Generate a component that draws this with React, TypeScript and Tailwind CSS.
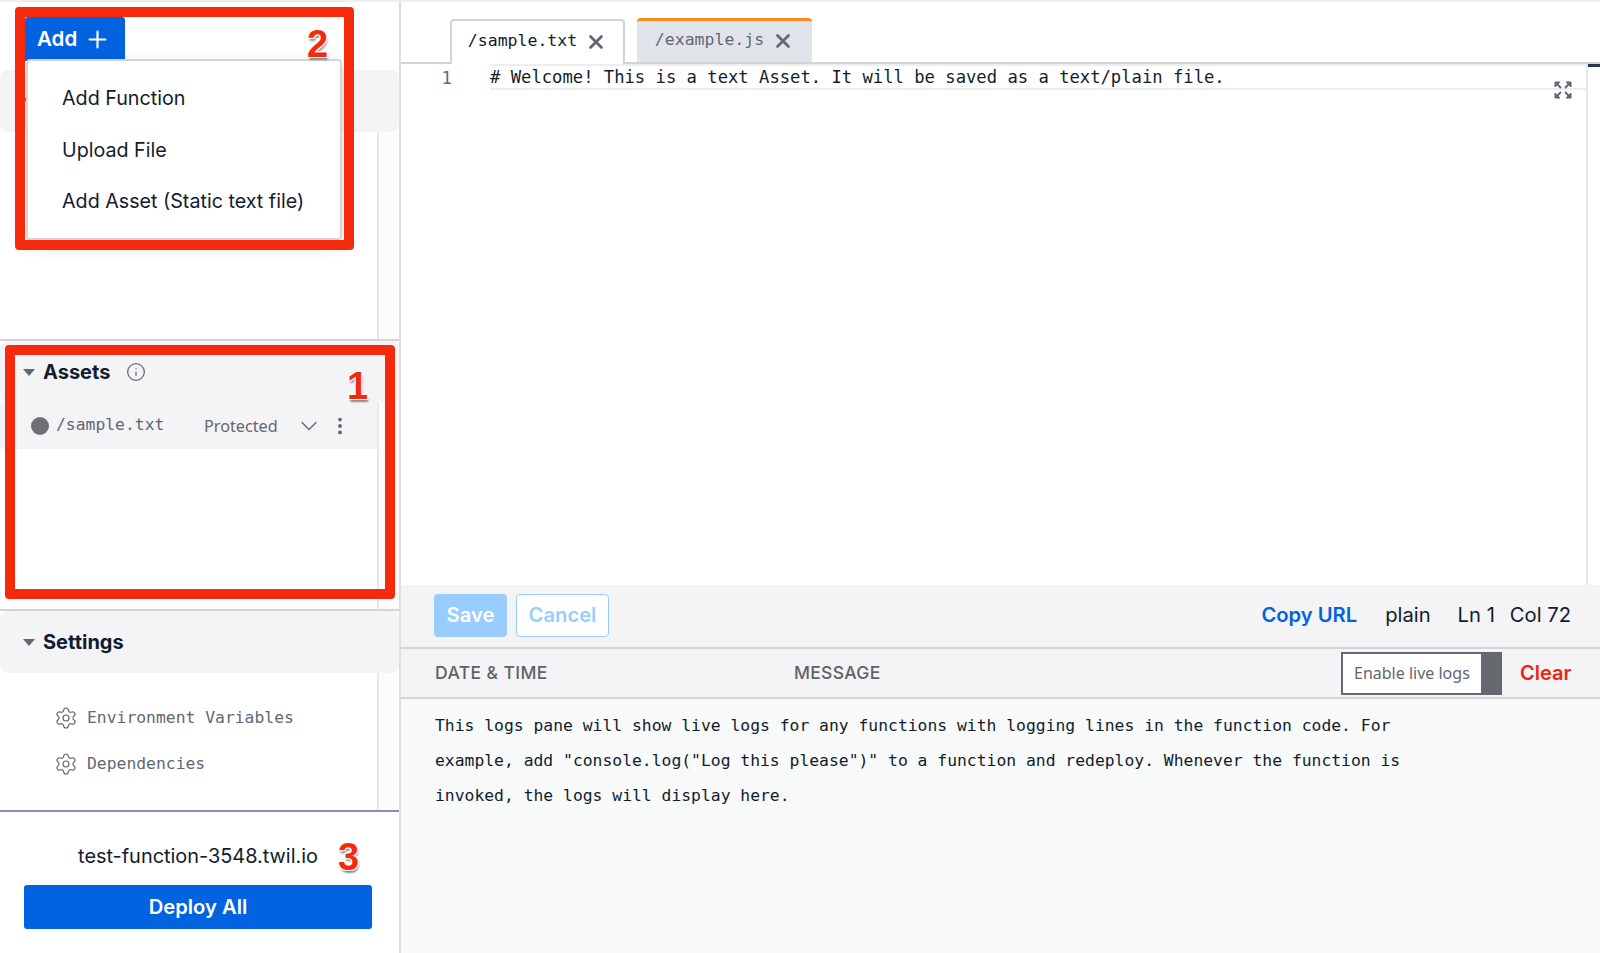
import { ChevronDown, EllipsisVertical, Info, Plus, Settings, X } from "lucide-react";

const inter = "font-['Inter','Liberation_Sans',sans-serif]";
const mono = "font-['DejaVu_Sans_Mono','Liberation_Mono',monospace]";
const digit =
  "absolute font-['Liberation_Sans',sans-serif] font-bold text-[38px] leading-none text-[#f52a0c] [text-shadow:1px_1px_0_#fff,-1px_-1px_0_#fff,1px_-1px_0_#fff,-1px_1px_0_#fff,1px_3px_2px_#888]";

function Caret() {
  return <div className="w-0 h-0 border-x-[6px] border-x-transparent border-t-[7px] border-t-[#636773]" />;
}

function Track() {
  return <div className="w-[22px] shrink-0 border-l-2 border-[#e8e8ea] bg-[#fcfcfc]" />;
}

function SectionHeader({ title, children }: { title?: string; children?: React.ReactNode }) {
  return (
    <div className="h-[62px] shrink-0 bg-[#f4f4f6] rounded-lg flex items-center pl-[23px]">
      <Caret />
      <span className="ml-[8px] text-[20px] font-bold text-[#121c2d]">{title}</span>
      {children}
    </div>
  );
}

function SettingRow({ label }: { label: string }) {
  return (
    <div className="h-[46px] flex items-center pl-[54px]">
      <Settings size={24} strokeWidth={1.2} className="text-[#636773]" />
      <span className={`ml-[9px] text-[16.36px] text-[#636773] ${mono}`}>{label}</span>
    </div>
  );
}

function Tab({ label, active }: { label: string; active?: boolean }) {
  return (
    <div
      className={
        active
          ? "w-[175px] h-[45px] -mb-[2px] pb-[2px] flex items-center justify-center gap-[8px] bg-white border-2 border-b-0 border-[#d4d4d6] rounded-t-[4px] text-[#121c2d]"
          : "w-[175px] h-[44px] pb-[2px] flex items-center justify-center gap-[8px] bg-[#e1e3ea] border-t-[3px] border-[#f98b16] rounded-t-[4px] text-[#636773]"
      }
    >
      <span className={`text-[16.5px] ${mono}`}>{label}</span>
      <X size={22} strokeWidth={3} className="text-[#636773]" />
    </div>
  );
}

function ExpandIcon() {
  return (
    <svg width="18" height="18" viewBox="0 0 18 18" className="absolute right-[28px] top-[17px] text-[#636773]" fill="currentColor" stroke="currentColor">
      <path d="M1 1h5L1 6z" />
      <path d="M3 3l4 4" strokeWidth="2" />
      <path d="M17 1h-5l5 5z" />
      <path d="M15 3l-4 4" strokeWidth="2" />
      <path d="M1 17h5l-5-5z" />
      <path d="M3 15l4-4" strokeWidth="2" />
      <path d="M17 17h-5l5-5z" />
      <path d="M15 15l-4-4" strokeWidth="2" />
    </svg>
  );
}

export default function App() {
  return (
    <div className={`relative w-[1600px] h-[953px] overflow-hidden bg-white flex flex-col ${inter}`}>
      <div className="h-[2px] shrink-0 bg-[#eeeeee]" />
      <div className="flex flex-1 min-h-0">
        {/* sidebar */}
        <aside className="relative w-[401px] shrink-0 border-r-2 border-[#dedee0] flex flex-col">
          <div className="h-[339px] shrink-0 border-b-2 border-[#d4d4d6] flex flex-col">
            <div className="h-[68px] shrink-0 pl-[25px] pt-[15px]">
              <div className="w-[100px] h-[44px] bg-[#0263e0] rounded-t-[3px] flex items-center pl-[12px] gap-[7px] text-white text-[20.5px] font-semibold">
                Add
                <Plus size={27} strokeWidth={1.9} />
              </div>
            </div>
            {/* the Functions header sits behind the open menu */}
            <SectionHeader />
            <div className="flex flex-1 justify-end">
              <Track />
            </div>
          </div>

          {/* add menu */}
          <div className="absolute left-[26px] top-[57px] w-[316px] h-[181px] bg-white border-2 border-[#d4d4d6] rounded-[4px] shadow-[0_6px_20px_rgba(0,0,0,0.12)] flex flex-col justify-center pl-[34px] pt-[2px] text-[19.7px] text-[#121c2d]">
            <div className="h-[51.5px] flex items-center">Add Function</div>
            <div className="h-[51.5px] flex items-center">Upload File</div>
            <div className="h-[51.5px] flex items-center">Add Asset (Static text file)</div>
          </div>

          <div className="h-[270px] shrink-0 border-b-2 border-[#d4d4d6] flex flex-col">
            <SectionHeader title="Assets">
              <Info size={20} strokeWidth={1.5} className="ml-[16px] text-[#636773]" />
            </SectionHeader>
            <div className="flex flex-1 min-h-0">
              <div className="flex-1 min-w-0">
                <div className="h-[46px] bg-[#f4f4f6] flex items-center pl-[31px]">
                  <div className="w-[18px] h-[18px] rounded-full bg-[#6e7076]" />
                  <span className={`ml-[7px] w-[148px] pb-[2px] text-[16.36px] text-[#636773] ${mono}`}>/sample.txt</span>
                  <span className="font-['Noto_Sans',sans-serif] text-[16.2px] text-[#636773]">Protected</span>
                  <ChevronDown size={28} strokeWidth={1.15} className="ml-[17px] text-[#636773]" />
                  <EllipsisVertical size={22} strokeWidth={2.2} className="ml-[6px] text-[#636773]" />
                </div>
              </div>
              <Track />
            </div>
          </div>

          <div className="h-[201px] shrink-0 border-b-2 border-[#8891aa] flex flex-col">
            <SectionHeader title="Settings" />
            <div className="flex flex-1 min-h-0">
              <div className="flex-1 pt-[22px]">
                <SettingRow label="Environment Variables" />
                <SettingRow label="Dependencies" />
              </div>
              <Track />
            </div>
          </div>

          <div className="flex-1 flex flex-col pl-[24px] pr-[27px]">
            <div className="text-center mt-[31px] text-[19.9px] leading-[26px] text-[#121c2d]">test-function-3548.twil.io</div>
            <div className="mt-[16px] h-[44px] bg-[#0263e0] rounded-[3px] flex items-center justify-center text-white text-[20.2px] font-semibold">
              Deploy All
            </div>
          </div>
        </aside>

        {/* editor and logs */}
        <main className="flex-1 min-w-0 flex flex-col">
          <div className="h-[62px] shrink-0 border-b-2 border-[#d4d4d6] flex items-end pl-[49px] gap-[12px]">
            <Tab label="/sample.txt" active />
            <Tab label="/example.js" />
          </div>
          <div className="relative h-[521px] shrink-0 flex">
            <div className={`w-[89px] shrink-0 pt-[3px] pr-[38px] text-right text-[17.25px] leading-[23px] text-[#606b85] ${mono}`}>1</div>
            <div className="flex-1 min-w-0">
              <div className={`h-[26px] bg-white border-y-2 border-[#eeeeee] text-[17.2px] leading-[22px] text-[#121c2d] whitespace-pre ${mono}`}>
                # Welcome! This is a text Asset. It will be saved as a text/plain file.
              </div>
            </div>
            <div className="w-[14px] shrink-0 border-l-2 border-[#e8e8ea]">
              <div className="h-[3px] bg-[#2a3550]" />
            </div>
            <ExpandIcon />
          </div>
          <div className="h-[64px] shrink-0 bg-[#f4f4f6] border-b-2 border-[#d4d4d6] flex items-center pl-[33px] pr-[29px] pb-[1px] text-[20.2px]">
            <div className="w-[73px] h-[43px] rounded-[4px] bg-[#99cdff] flex items-center justify-center text-white font-semibold">Save</div>
            <div className="ml-[9px] w-[93px] h-[43px] rounded-[4px] bg-white border border-[#99cdff] flex items-center justify-center text-[#99cdff] font-semibold">Cancel</div>
            <div className="ml-auto text-[#0263e0] font-semibold">Copy URL</div>
            <div className="ml-[28px] text-[#121c2d]">plain</div>
            <div className="ml-[27px] text-[#121c2d]">Ln 1</div>
            <div className="ml-[15px] text-[#121c2d]">Col 72</div>
          </div>
          <div className="h-[50px] shrink-0 bg-[#f4f4f6] border-b-2 border-[#d4d4d6] flex items-center pl-[34px] pr-[29px] text-[#5f6268]">
            <div className="w-[359px] text-[17.5px] font-medium tracking-[0.4px]">DATE &amp; TIME</div>
            <div className="text-[17.5px] font-medium tracking-[0.3px]">MESSAGE</div>
            <div className="ml-auto w-[161px] h-[43px] flex border-2 border-[#66686f] bg-white">
              <div className="flex-1 flex items-center pl-[11px] font-['Noto_Sans',sans-serif] text-[16px] text-[#63666f]">Enable live logs</div>
              <div className="w-[19px] bg-[#66686f]" />
            </div>
            <div className="ml-[18px] w-[51px] text-[20px] font-semibold text-[#f5200f]">Clear</div>
          </div>
          <div className={`flex-1 bg-[#f8f9f9] pl-[34px] pt-[10px] text-[16.36px] leading-[34.8px] text-[#121c2d] ${mono}`}>
            <div>This logs pane will show live logs for any functions with logging lines in the function code. For</div>
            <div>example, add "console.log("Log this please")" to a function and redeploy. Whenever the function is</div>
            <div>invoked, the logs will display here.</div>
          </div>
        </main>
      </div>

      {/* annotations drawn over the screenshot */}
      <div className="absolute left-[15px] top-[7px] w-[339px] h-[243px] border-[10px] border-[#f52a0c] rounded-[4px]" />
      <div className="absolute left-[5px] top-[345px] w-[390px] h-[254px] border-[10px] border-[#f52a0c] rounded-[4px]" />
      <div className={`${digit} left-[307px] top-[25px]`}>2</div>
      <div className={`${digit} left-[347px] top-[367px]`}>1</div>
      <div className={`${digit} left-[338px] top-[838px]`}>3</div>
    </div>
  );
}
